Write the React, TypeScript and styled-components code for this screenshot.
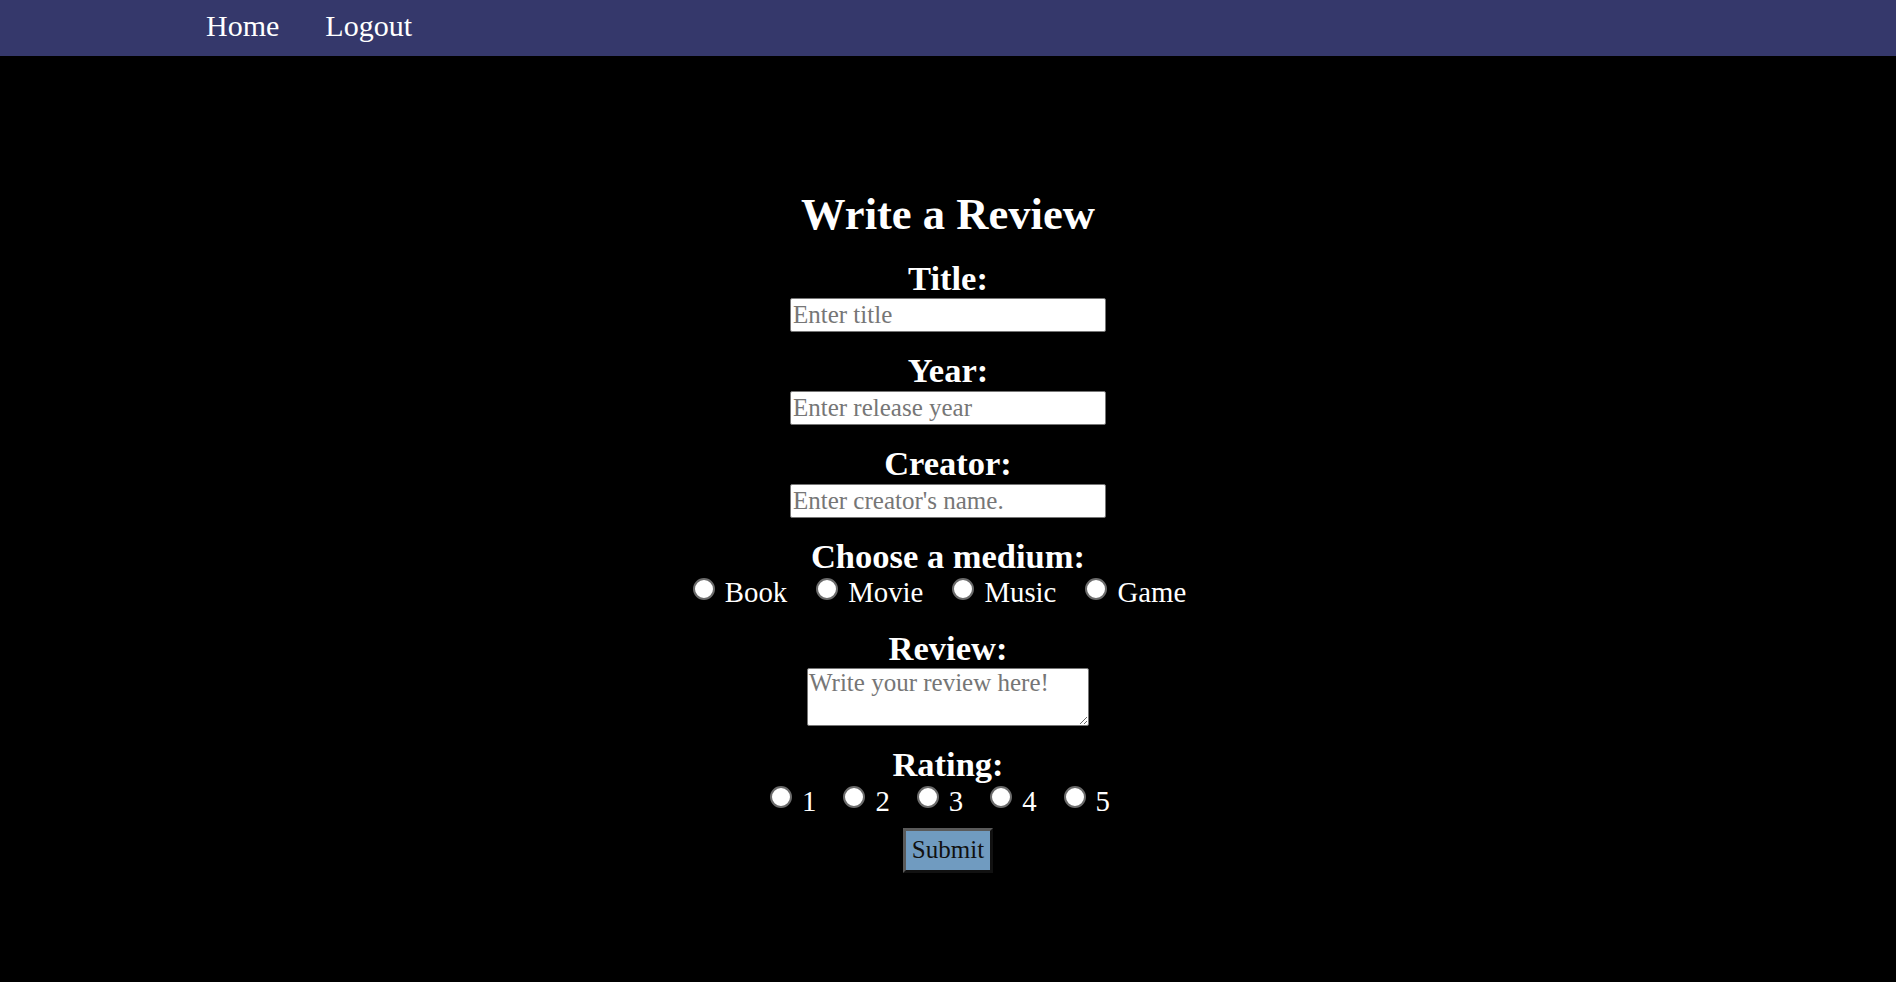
import React from "react";
import styled, { createGlobalStyle } from "styled-components";

const GlobalStyle = createGlobalStyle`
  html, body {
    margin: 0;
    padding: 0;
    background: #000000;
    font-family: "Liberation Serif", "Times New Roman", serif;
    line-height: 1.15;
    color: #ffffff;
  }
  * { box-sizing: border-box; }
`;

const NavBar = styled.nav`
  height: 56px;
  background: #35386b;
  display: flex;
  align-items: center;
  gap: 46px;
  padding: 0 0 4px 206px;
`;

const NavLink = styled.a`
  color: #ffffff;
  font-size: 30px;
  text-decoration: none;
  line-height: 1.15;
`;

const Main = styled.main`
  display: flex;
  flex-direction: column;
  align-items: center;
  padding-top: 132.5px;
`;

const Heading = styled.h1`
  margin: 0 0 19px;
  font-size: 44.6px;
  font-weight: bold;
  line-height: 1.15;
  color: #ffffff;
`;

const Form = styled.form`
  display: flex;
  flex-direction: column;
  align-items: center;
`;

const Field = styled.div<{ $after?: number }>`
  display: flex;
  flex-direction: column;
  align-items: center;
  margin-bottom: ${(p) => (p.$after ?? 19)}px;
`;

const Label = styled.label`
  display: block;
  font-size: 34.5px;
  font-weight: bold;
  line-height: 1.15;
  color: #ffffff;
`;

const TextInput = styled.input`
  width: 316px;
  height: 34px;
  font-family: "Liberation Serif", "Times New Roman", serif;
  font-size: 25px;
  line-height: 1.15;
  padding: 1px 2px;
  border: 1px solid #767676;
  border-radius: 2px;
  background: #ffffff;
  color: #000000;
  &::placeholder { color: #767676; }
`;

const TextArea = styled.textarea`
  width: 282px;
  height: 58px;
  font-family: "Liberation Serif", "Times New Roman", serif;
  font-size: 25px;
  line-height: 1.15;
  padding: 0 1px;
  border: 1px solid #767676;
  border-radius: 2px;
  background: #ffffff;
  color: #000000;
  &::placeholder { color: #767676; }
`;

const RadioGroup = styled.div<{ $gap: number; $trail: number }>`
  display: flex;
  justify-content: center;
  gap: ${(p) => p.$gap}px;
  padding-right: ${(p) => p.$trail}px;
`;

const Option = styled.label`
  display: flex;
  align-items: flex-start;
  font-size: 28.8px;
  line-height: 1.15;
  color: #ffffff;
  cursor: pointer;
`;

const Radio = styled.input`
  appearance: none;
  -webkit-appearance: none;
  width: 22px;
  height: 22px;
  margin: 1.5px 10px 0 0;
  border-radius: 50%;
  border: 2px solid #6b6b6b;
  background: #ffffff;
  flex-shrink: 0;
`;

const SubmitButton = styled.button`
  font-family: "Liberation Serif", "Times New Roman", serif;
  font-size: 25px;
  line-height: 1.15;
  color: #111111;
  background: #709bc0;
  padding: 5px 5.5px;
  border-width: 3px;
  border-style: solid;
  border-color: #5a5a5a #111111 #111111 #5a5a5a;
  cursor: pointer;
`;

const mediums = ["Book", "Movie", "Music", "Game"];
const ratings = ["1", "2", "3", "4", "5"];

export default function App() {
  return (
    <>
      <GlobalStyle />
      <NavBar>
        <NavLink href="#">Home</NavLink>
        <NavLink href="#">Logout</NavLink>
      </NavBar>
      <Main>
        <Heading>Write a Review</Heading>
        <Form onSubmit={(e) => e.preventDefault()}>
          <Field>
            <Label htmlFor="title">Title:</Label>
            <TextInput id="title" type="text" placeholder="Enter title" />
          </Field>
          <Field>
            <Label htmlFor="year">Year:</Label>
            <TextInput id="year" type="text" placeholder="Enter release year" />
          </Field>
          <Field>
            <Label htmlFor="creator">Creator:</Label>
            <TextInput id="creator" type="text" placeholder="Enter creator's name." />
          </Field>
          <Field>
            <Label>Choose a medium:</Label>
            <RadioGroup $gap={29} $trail={17}>
              {mediums.map((m) => (
                <Option key={m}>
                  <Radio type="radio" name="medium" value={m} />
                  {m}
                </Option>
              ))}
            </RadioGroup>
          </Field>
          <Field>
            <Label htmlFor="review">Review:</Label>
            <TextArea id="review" rows={2} placeholder="Write your review here!" />
          </Field>
          <Field $after={10}>
            <Label>Rating:</Label>
            <RadioGroup $gap={27} $trail={16}>
              {ratings.map((r) => (
                <Option key={r}>
                  <Radio type="radio" name="rating" value={r} />
                  {r}
                </Option>
              ))}
            </RadioGroup>
          </Field>
          <SubmitButton type="submit">Submit</SubmitButton>
        </Form>
      </Main>
    </>
  );
}
